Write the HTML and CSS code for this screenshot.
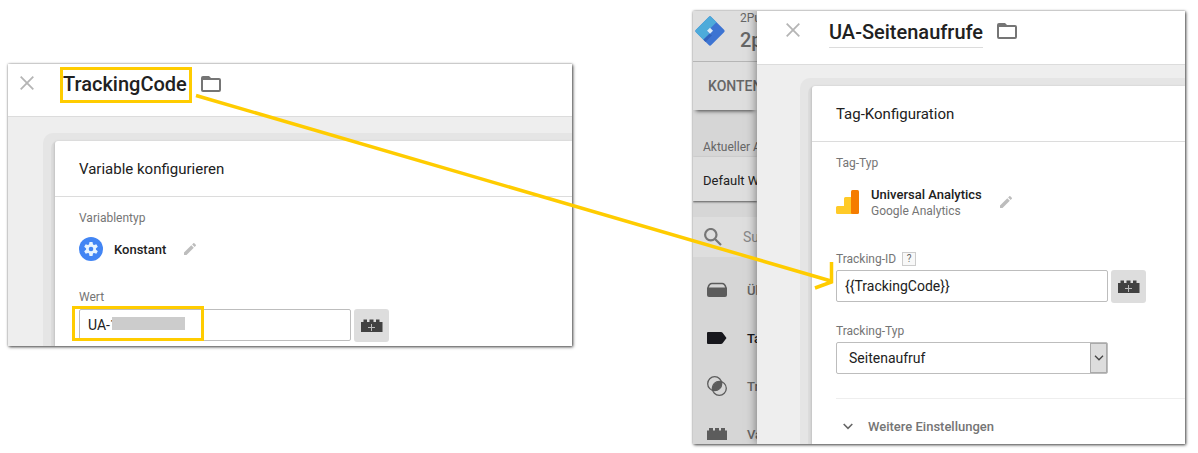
FILE: index.html
```html
<!DOCTYPE html>
<html lang="de">
<head>
  <meta charset="UTF-8">
  <title>TrackingCode</title>
  <link rel="stylesheet" href="styles.css">
</head>
<body>

  <!-- shared icons -->
  <svg class="icon-defs" aria-hidden="true">
    <symbol id="icon-close" viewBox="0 0 14 14"><path d="M0.7 0.7 13.3 13.3M13.3 0.7 0.7 13.3" fill="none" stroke="currentColor" stroke-width="1.8"/></symbol>
    <symbol id="icon-folder" viewBox="0 0 20 16"><path fill="currentColor" fill-rule="evenodd" d="M2 0h6l2 2h8a2 2 0 0 1 2 2v10a2 2 0 0 1-2 2H2a2 2 0 0 1-2-2V2a2 2 0 0 1 2-2zM2 4v10h16V4z"/></symbol>
    <symbol id="icon-pencil" viewBox="0 0 12 12"><path fill="currentColor" d="M0 9.5V12h2.500l7.300-7.300-2.500-2.500zM11.800 2.700a.7.7 0 0 0 0-1L10.300.2a.7.7 0 0 0-1 0L8.100 1.400l2.500 2.500z"/></symbol>
    <symbol id="icon-brick" viewBox="0 0 22 14"><path fill="#414141" d="M0 3h2.500V0.500h3.500V3h2.500V0.500h4V3h2.500V0.500h3.500V3H21.500v10H0z"/><path d="M10.500 5v7M7 8.500h7" stroke="#bbb" stroke-width="1"/></symbol>
  </svg>

  <main class="stage">

    <section class="window variable">
      <div class="panel">
        <header class="panel-head">
          <button class="close" aria-label="Schließen"><svg width="14" height="14"><use href="#icon-close"/></svg></button>
          <h1 class="title marked">TrackingCode</h1>
          <button class="folder" aria-label="Ordner"><svg width="20" height="16"><use href="#icon-folder"/></svg></button>
        </header>
        <div class="panel-body">
          <div class="card">
            <h2>Variable konfigurieren</h2>
            <div class="card-body">
              <p class="label">Variablentyp</p>
              <div class="type-row">
                <svg width="24" height="24" viewBox="0 0 24 24"><circle cx="12" cy="12" r="12" fill="#4285f4"/><g fill="#e8f4ff"><circle cx="12" cy="12" r="5"/><path d="M10.500 5h3l.6 3h-4.200zM10.500 19h3l.6-3h-4.200z"/><path d="M10.500 5h3l.6 3h-4.200zM10.500 19h3l.6-3h-4.200z" transform="rotate(60 12 12)"/><path d="M10.500 5h3l.6 3h-4.200zM10.500 19h3l.6-3h-4.200z" transform="rotate(120 12 12)"/></g><circle cx="12" cy="12" r="2.300" fill="#4285f4"/></svg>
                <strong>Konstant</strong>
                <button class="edit" aria-label="Bearbeiten"><svg width="12" height="12"><use href="#icon-pencil"/></svg></button>
              </div>
              <label class="label" for="wert">Wert</label>
              <div class="field-row">
                <div class="value-field">
                  <input type="text" id="wert" value="UA-1">
                  <span class="redacted"></span>
                  <span class="marker"></span>
                </div>
                <button class="brick" aria-label="Variable einfügen"><svg width="22" height="14"><use href="#icon-brick"/></svg></button>
              </div>
            </div>
          </div>
        </div>
      </div>
    </section>

    <section class="window tag">
      <aside class="sidebar">
        <div class="account">
          <svg width="30" height="30" viewBox="0 0 30 30"><path fill="#3d74d2" d="M13.500 1.200a2 2 0 0 1 3 0l12.300 12.300a2 2 0 0 1 0 3L16.500 28.800a2 2 0 0 1-3 0L1.200 16.500a2 2 0 0 1 0-3z"/><path fill="#4dabda" d="M13.500 1.200a2 2 0 0 1 3 0l5 5L12.300 15.200l2.200 2.500-6.200 6L1.200 16.500a2 2 0 0 1 0-3z"/><path fill="#3263bd" d="m8.300 23.700 6.200-6 2.500 1.500-6.500 6.700z"/><path fill="#dcebf6" d="m15 11.800 3 3-3 3-3-3z"/></svg>
          <div class="account-name"><small>2Pu</small><b>2p</b></div>
        </div>
        <div class="tabs">KONTEN</div>
        <p class="workspace-label">Aktueller Arbeitsbereich</p>
        <div class="workspace">Default Workspace</div>
        <div class="search">
          <svg width="18" height="18" viewBox="0 0 18 18"><path d="M11.500 11.500 17 17M12.500 6.700a5.700 5.700 0 1 1-11.400 0 5.700 5.700 0 0 1 11.400 0z" fill="none" stroke="#777" stroke-width="2.200"/></svg>
          <span>Suchen</span>
        </div>
        <nav>
          <a href="#"><svg width="20" height="16" viewBox="0 0 20 16"><path d="M1 6Q2 1.500 5 1.500h10q3 0 4 4.500" fill="none" stroke="#5c5c5c" stroke-width="1.500"/><path fill="#5c5c5c" d="M0 5.500h20V13a2 2 0 0 1-2 2H2a2 2 0 0 1-2-2z"/></svg>Übersicht</a>
          <a href="#" class="active"><svg width="20" height="12" viewBox="0 0 20 12"><path fill="#17171c" d="M1 0H14a2 2 0 0 1 1.600.8L19.500 6l-3.900 5.200A2 2 0 0 1 14 12H1a1 1 0 0 1-1-1V1a1 1 0 0 1 1-1z"/></svg>Tags</a>
          <a href="#"><svg width="20" height="20" viewBox="0 0 20 20"><path fill="#5c5c5c" d="M5.300 12.500Q5.500 7 12.500 5.300q2.500 0 2.200 2.200Q14 14 7.500 14.700q-2 0-2.200-2.200z"/><g fill="none" stroke="#5c5c5c" stroke-width="1.300"><circle cx="7.700" cy="7.700" r="7"/><circle cx="12.300" cy="12.300" r="7"/></g></svg>Trigger</a>
          <a href="#"><svg width="20" height="12" viewBox="0 0 20 12"><path fill="#5c5c5c" d="M0 2.500h2V0h4v2.500h2V0h4v2.500h2V0h4v2.500h2V12H0z"/></svg>Variablen</a>
        </nav>
      </aside>

      <div class="panel">
        <header class="panel-head">
          <button class="close" aria-label="Schließen"><svg width="14" height="14"><use href="#icon-close"/></svg></button>
          <h1 class="title underlined">UA-Seitenaufrufe</h1>
          <button class="folder" aria-label="Ordner"><svg width="20" height="16"><use href="#icon-folder"/></svg></button>
        </header>
        <div class="panel-body">
          <div class="card">
            <h2>Tag-Konfiguration</h2>
            <div class="card-body">
              <p class="label">Tag-Typ</p>
              <div class="type-row">
                <svg width="24" height="24" viewBox="0 0 24 24"><path fill="#ffca28" d="M1.500 16H8V8.500A1.500 1.500 0 0 1 9.500 7H16v17H1.500A1.500 1.500 0 0 1 0 22.500v-5A1.500 1.500 0 0 1 1.500 16z"/><rect x="15" y="0" width="8" height="24" rx="1.500" fill="#f57c00"/></svg>
                <div class="type-text">
                  <strong>Universal Analytics</strong>
                  <span>Google Analytics</span>
                </div>
                <button class="edit" aria-label="Bearbeiten"><svg width="12" height="12"><use href="#icon-pencil"/></svg></button>
              </div>
              <div class="label-row">
                <label class="label" for="tracking-id">Tracking-ID</label>
                <button class="help">?</button>
              </div>
              <div class="field-row">
                <input type="text" id="tracking-id" value="{{TrackingCode}}">
                <button class="brick" aria-label="Variable einfügen"><svg width="22" height="14"><use href="#icon-brick"/></svg></button>
              </div>
              <label class="label" for="tracking-typ">Tracking-Typ</label>
              <div class="select-box">
                <select id="tracking-typ"><option>Seitenaufruf</option></select>
                <span class="select-arrow"><svg width="10" height="6" viewBox="0 0 10 6"><path d="M1 .8 5 4.800 9 .8" fill="none" stroke="#444" stroke-width="1.300"/></svg></span>
              </div>
              <button class="more"><svg width="10" height="7" viewBox="0 0 10 7"><path d="M.7 1 5 5.300 9.300 1" fill="none" stroke="#666" stroke-width="1.600"/></svg>Weitere Einstellungen</button>
            </div>
          </div>
        </div>
      </div>
    </section>

    <svg class="arrow" viewBox="0 0 1198 453" preserveAspectRatio="none" aria-hidden="true">
      <path d="M196 95.500 831 281M831.500 262v20L815 288" fill="none" stroke="#fc0" stroke-width="3.500"/>
    </svg>
  </main>

</body>
</html>
```

FILE: styles.css
```css
* {
  box-sizing: border-box;
}

body {
  font-family: Roboto, sans-serif;
  margin: 0;
  background-color: #fff;
  color: #212121;
}

h1, h2, p {
  margin: 0;
}

button {
  font-family: inherit;
  border: none;
  padding: 0;
  background: none;
  cursor: pointer;
}

svg {
  display: block;
  flex: none;
}

.icon-defs {
  position: absolute;
  width: 0;
  height: 0;
}

.stage {
  position: relative;
  display: grid;
  grid-template-columns: 564fr 492fr;
  column-gap: 121px;
  align-items: start;
  padding: 11px 13px 9px 8px;
}

/* the frame shadow sits on the window, clipping only affects its children */
.window {
  display: flex;
  overflow: hidden;
  box-shadow: 1px 1px 3px rgba(0,0,0,0.7), 0 0 2px rgba(0,0,0,0.3);
}

.variable {
  margin-top: 53px;
}

.panel {
  flex: 1;
  min-width: 0;
  display: flex;
  flex-direction: column;
  background-color: #eee;
}

.panel-head {
  display: flex;
  align-items: flex-start;
  height: 53px;
  padding-left: 12px;
  background: white;
  border-bottom: 1px solid #dcdcdc;
}

.tag .panel-head {
  height: 54px;
  padding-left: 29px;
}

.close {
  margin-top: 12px;
  color: #b5b5b5;
}

.title {
  font-size: 20px;
  font-weight: 500;
  line-height: 24px;
  white-space: nowrap;
}

.marked {
  margin: 3px 9px 0 26px;
  padding: 2px 2px 4px 0;
  border: 3px solid #fc0;
}

.underlined {
  margin: 9px 14px 0 29px;
  padding-bottom: 3px;
  border-bottom: 1px solid #dcdcdc;
}

.folder {
  margin-top: 12px;
  color: #757575;
}

.panel-body {
  flex: 1;
  overflow: hidden;
  display: flex;
  padding: 24px 0 0 47px;
}

.tag .panel-body {
  padding: 21px 0 0 55px;
}

.card {
  flex: 1;
  min-width: 0;
  background: white;
  border-radius: 3px 0 0 0;
  box-shadow: 0 1px 3px rgba(0,0,0,0.25), 0 4px 0 4px #dcdcdc, 0 4px 0 12px #e5e5e5;
}

.card h2 {
  height: 56px;
  padding-left: 24px;
  border-bottom: 1px solid #dcdcdc;
  font-size: 15px;
  font-weight: 400;
  line-height: 56px;
}

.card-body {
  padding: 13px 0 4px 24px;
}

.label {
  display: block;
  font-size: 12px;
  line-height: 16px;
  color: #757575;
}

.type-row {
  display: flex;
  align-items: center;
  height: 24px;
  margin: 11px 0 28px;
  font-size: 13px;
}

.type-row strong {
  font-weight: 500;
  margin-left: 11px;
}

.type-row .edit {
  margin-left: 18px;
  color: #bdbdbd;
}

.tag .type-row {
  height: 32px;
  margin: 15px 0 32px;
}

.type-text {
  display: flex;
  flex-direction: column;
  margin-left: 11px;
  padding-top: 2px;
  line-height: 16px;
}

.type-text strong {
  margin-left: 0;
}

.type-text span {
  font-size: 12px;
  color: #757575;
}

.label-row {
  display: flex;
  align-items: center;
  gap: 6px;
  height: 17px;
}

.label-row .label {
  line-height: 18px;
}

.help {
  width: 14px;
  height: 14px;
  border: 1px solid #ccc;
  background: #f8f8f8;
  color: #666;
  font-size: 10px;
  line-height: 12px;
}

.field-row {
  display: flex;
  gap: 3px;
  margin-top: 4px;
}

.value-field {
  position: relative;
}

input, select {
  display: block;
  width: 272px;
  height: 32px;
  padding: 0 8px;
  border: 1px solid #bdbdbd;
  border-radius: 2px;
  background: white;
  color: #212121;
  font-family: inherit;
  font-size: 14px;
}

.redacted {
  position: absolute;
  left: 33px;
  top: 8px;
  width: 73px;
  height: 13px;
  background: #ccc;
}

.marker {
  position: absolute;
  left: -7px;
  top: -3px;
  width: 132px;
  height: 35px;
  border: 3px solid #fc0;
}

.brick {
  display: flex;
  align-items: center;
  justify-content: center;
  width: 35px;
  height: 33px;
  border-radius: 3px;
  background: #ddd;
}

.tag .field-row {
  margin: 3px 0 20px;
}

.select-box {
  position: relative;
  width: 272px;
  margin: 3px 0 24px;
}

select {
  appearance: none;
  padding: 0 12px;
}

.select-arrow {
  position: absolute;
  top: 1px;
  right: 1px;
  bottom: 1px;
  width: 17px;
  display: flex;
  align-items: center;
  justify-content: center;
  border: 1px solid #aaa;
  background: #ddd;
  pointer-events: none;
}

.more {
  display: flex;
  align-items: center;
  gap: 15px;
  width: 100%;
  height: 42px;
  padding: 13px 0 0 7px;
  border-top: 1px solid #eee;
  color: #757575;
  font-size: 13px;
  font-weight: 500;
}

/* dimmed page behind the tag panel */
.sidebar {
  contain: size;
  width: 64px;
  overflow: hidden;
  background: #d6d6d6;
  color: #666;
  white-space: nowrap;
}

.tag .panel {
  box-shadow: 0 0 10px rgba(0,0,0,0.5);
}

.account {
  display: flex;
  gap: 15px;
  height: 51px;
  padding: 5px 0 0 2px;
  background: #dedede;
  border-bottom: 1px solid #b5b5b5;
}

.account-name {
  display: flex;
  flex-direction: column;
  margin-top: -6px;
}

.account-name small {
  font-size: 12px;
  line-height: 16px;
}

.account-name b {
  font-size: 20px;
  font-weight: 500;
  line-height: 28px;
}

/* only the lower edge throws a shadow */
.tabs {
  height: 48px;
  padding-left: 15px;
  background: #dedede;
  box-shadow: 0 4px 4px -3px rgba(0,0,0,0.7);
  font-size: 14px;
  font-weight: 500;
  line-height: 48px;
}

.workspace-label {
  padding: 29px 0 2px 10px;
  font-size: 12px;
  line-height: 16px;
}

.workspace {
  height: 44px;
  padding-left: 10px;
  background: #dedede;
  box-shadow: 0 1px 2px rgba(0,0,0,0.6);
  color: #212121;
  font-size: 13px;
  line-height: 48px;
}

.search {
  display: flex;
  align-items: center;
  gap: 21px;
  height: 40px;
  margin: 16px 0 9px;
  padding-left: 11px;
  background: #dedede;
  color: #888;
  font-size: 14px;
}

nav a {
  display: flex;
  align-items: center;
  gap: 20px;
  height: 48px;
  padding-left: 14px;
  color: #666;
  font-size: 13px;
  font-weight: 500;
  text-decoration: none;
}

nav .active {
  color: #17171c;
}

.arrow {
  position: absolute;
  inset: 0;
  width: 100%;
  height: 100%;
  pointer-events: none;
}
```
